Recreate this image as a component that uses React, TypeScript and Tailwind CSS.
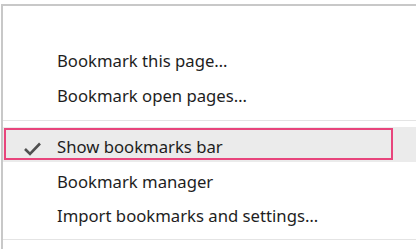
import React from "react";

const font = { fontFamily: '"Noto Sans", "Open Sans", sans-serif' };

function Row({ children, className = "" }: { children: React.ReactNode; className?: string }) {
  return (
    <div className={`flex h-[34.5px] items-center pl-[54px] text-[16.7px] leading-[20px] text-[#1e1e1e] ${className}`}>
      {children}
    </div>
  );
}

export default function App() {
  return (
    <div className="h-[249px] w-[416px] overflow-hidden bg-white" style={font}>
      <div className="ml-[1px] mt-[4px] h-[245px] border-l-2 border-t-2 border-[#c8c8c8] bg-white">
        <div className="h-[38px]" />
        <Row>Bookmark this page…</Row>
        <Row>Bookmark open pages…</Row>
        <div className="mt-[6.5px] h-px bg-[#e4e4e4]" />
        <div className="relative mt-[6px] flex h-[35px] items-center bg-[#ebebeb] pl-[54px] pt-[5px] text-[16.7px] leading-[20px] text-[#1e1e1e]">
          <svg className="absolute left-[20px] top-[14px]" width="19" height="15" viewBox="0 0 19 15">
            <path d="M2 8 L7 13 L17 2.5" fill="none" stroke="#505050" strokeWidth="2.6" />
          </svg>
          Show bookmarks bar
          <div className="pointer-events-none absolute left-[1px] top-[1px] h-[32px] w-[389px] border-2 border-[#e8457c]" />
        </div>
        <Row className="mt-[3px]">Bookmark manager</Row>
        <Row>Import bookmarks and settings…</Row>
        <div className="mt-[5px] h-px bg-[#e4e4e4]" />
      </div>
    </div>
  );
}
